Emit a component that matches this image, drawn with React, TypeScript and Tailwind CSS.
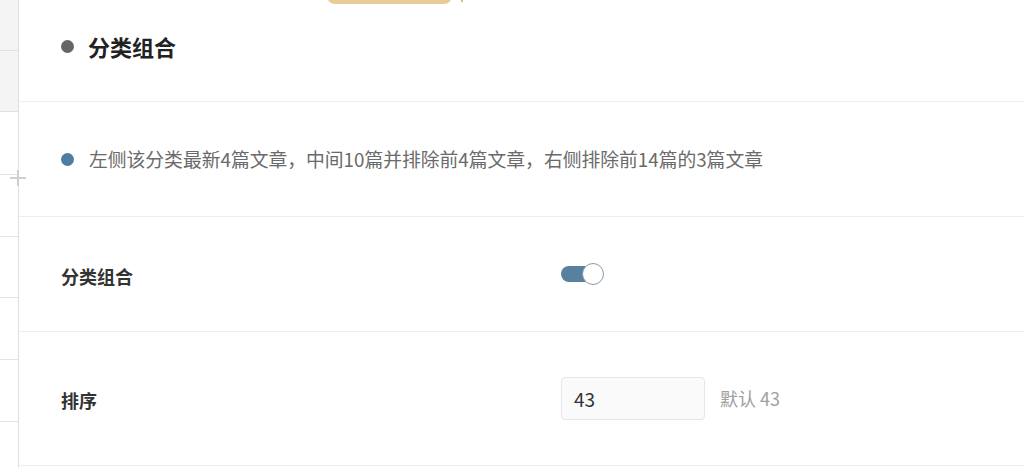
import { useState } from "react";

const font = { fontFamily: '"Microsoft YaHei", "Noto Sans CJK SC", "Noto Sans", sans-serif' };

const Toggle = () => {
  const [on, setOn] = useState(true);
  return (
    <button
      onClick={() => setOn(!on)}
      className="relative flex h-[22px] w-[44px] items-center"
    >
      <span className={`h-[16px] w-[40px] rounded-full ${on ? "bg-[#58809f]" : "bg-[#ccc]"}`} />
      <span
        className={`absolute top-0 h-[22px] w-[22px] rounded-full border border-[#8a9aa8] bg-white ${on ? "left-[21px]" : "left-0"}`}
      />
    </button>
  );
};

const SideStrip = () => (
  <div className="relative w-[19px] shrink-0 border-r border-[#dedede]">
    <div className="bg-[#f4f4f4]">
      <div className="h-[51px] border-b border-[#e2e2e2]" />
      <div className="h-[61px] border-b border-[#e2e2e2]" />
    </div>
    <div className="h-[63px] border-b border-[#e4e4e4]" />
    <div className="h-[62px] border-b border-[#e4e4e4]" />
    <div className="h-[61px] border-b border-[#e4e4e4]" />
    <div className="h-[62px] border-b border-[#e4e4e4]" />
    <div className="h-[62px] border-b border-[#e4e4e4]" />
    {/* drag handle cross */}
    <div className="absolute left-[10px] top-[170px] h-[16px] w-[16px]">
      <div className="absolute left-0 top-[7px] h-[2px] w-[16px] bg-[#cfcfcf]" />
      <div className="absolute left-[7px] top-0 h-[16px] w-[2px] bg-[#cfcfcf]" />
    </div>
  </div>
);

export default function App() {
  const [order, setOrder] = useState("43");
  return (
    <div className="flex h-[467px] w-[1024px] overflow-hidden bg-white" style={font}>
      <SideStrip />
      <div className="flex-1">
        {/* header */}
        <div className="relative flex h-[102px] items-center border-b border-[#eeeeee] pl-[42px] pb-[8px]">
          <div className="absolute left-[308px] top-[-10px] h-[14px] w-[125px] rounded-b-[8px] bg-[#e8cc98]" />
          <div className="absolute left-[442px] top-0 h-[2px] w-[2px] rounded-full bg-[#c9a86a]" />
          <span className="mr-[14px] h-[13px] w-[13px] rounded-full bg-[#666]" />
          <h2 className="text-[22px] font-bold text-[#222]">分类组合</h2>
        </div>
        {/* note */}
        <div className="flex h-[115px] items-center border-b border-[#eeeeee] pl-[42px]">
          <span className="mr-[15px] h-[13px] w-[13px] shrink-0 rounded-full bg-[#4f7ca3]" />
          <p className="text-[18.8px] text-[#6a6a6a]">
            左侧该分类最新4篇文章，中间10篇并排除前4篇文章，右侧排除前14篇的3篇文章
          </p>
        </div>
        {/* toggle row */}
        <div className="flex h-[115px] items-center border-b border-[#eeeeee] pl-[42px]">
          <label className="w-[500px] pt-[4px] text-[18px] font-bold text-[#333]">分类组合</label>
          <Toggle />
        </div>
        {/* order row */}
        <div className="flex h-[134px] items-center border-b border-[#eeeeee] pl-[42px]">
          <label className="w-[500px] pt-[4px] text-[18px] font-bold text-[#333]">排序</label>
          <input
            value={order}
            onChange={(e) => setOrder(e.target.value)}
            className="h-[43px] w-[144px] rounded-[4px] border border-[#e6e6e6] bg-[#fafafa] px-[12px] text-[19px] text-[#333] outline-none"
          />
          <span className="ml-[15px] text-[18px] text-[#a0a0a0]">默认 43</span>
        </div>
      </div>
    </div>
  );
}
